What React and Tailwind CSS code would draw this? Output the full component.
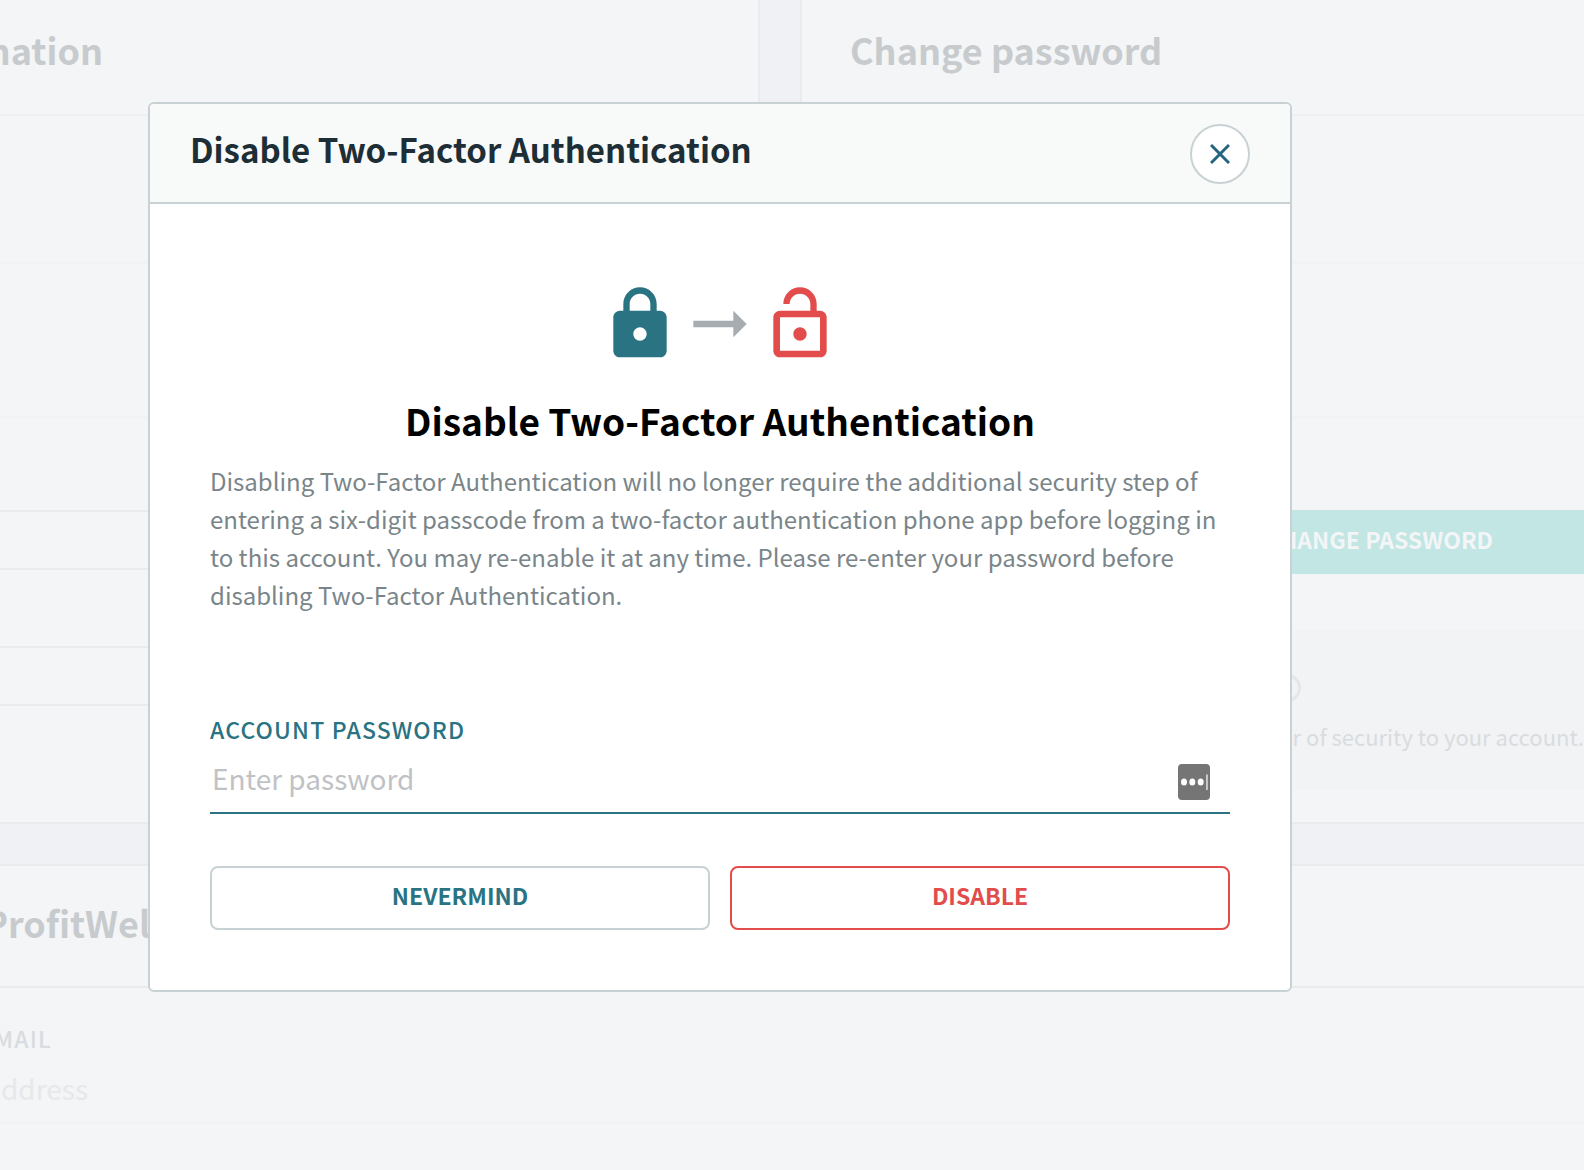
import { useState } from "react";

const LOCK =
  "M18 8h-1V6c0-2.76-2.24-5-5-5S7 3.24 7 6v2H6c-1.1 0-2 .9-2 2v10c0 1.1.9 2 2 2h12c1.1 0 2-.9 2-2V10c0-1.1-.9-2-2-2zm-6 9c-1.1 0-2-.9-2-2s.9-2 2-2 2 .9 2 2-.9 2-2 2zm3.1-9H8.9V6c0-1.71 1.39-3.1 3.1-3.1 1.71 0 3.1 1.39 3.1 3.1v2z";
const ARROW = "M16 11H4v2h12v3l4-4-4-4z";
const LOCK_OPEN =
  "M12 17c1.1 0 2-.9 2-2s-.9-2-2-2-2 .9-2 2 .9 2 2 2zm6-9h-1V6c0-2.76-2.24-5-5-5S7 3.24 7 6h1.9c0-1.71 1.39-3.1 3.1-3.1 1.71 0 3.1 1.39 3.1 3.1v2H6c-1.1 0-2 .9-2 2v10c0 1.1.9 2 2 2h12c1.1 0 2-.9 2-2V10c0-1.1-.9-2-2-2zm0 12H6V10h12v10z";

function Icon({ path, className }) {
  return (
    <svg
      viewBox="0 0 24 24"
      fill="currentColor"
      aria-hidden="true"
      className={`h-20 w-20 ${className}`}>
      <path d={path} />
    </svg>
  );
}

// Faded account settings page behind the dialog
function SettingsPage() {
  return (
    <div className="flex min-h-screen flex-col gap-10 bg-[#f0f1f5] text-[#c8cbce]">
      <div className="flex gap-10">
        <section className="h-[824px] w-[760px] shrink-0 border-r-2 border-b-2 border-[#e9ebee] bg-[#f3f5f7]">
          <div className="flex h-[116px] w-full border-b-2 border-[#eff0f2] pt-5">
            <h2 className="flex w-[103px] justify-end overflow-hidden text-[36px] leading-[58px] font-semibold">
              Information
            </h2>
          </div>
          <div className="h-[148px] border-b-2 border-[#f0f2f4]" />
          <div className="h-[154px] border-b-2 border-[#f0f2f4]" />
          <div className="h-[94px] border-b-2 border-[#e9ebee]" />
          <div className="h-[58px] border-b-2 border-[#e9ebee]" />
          <div className="h-[78px] border-b-2 border-[#e9ebee]" />
          <div className="h-[58px] border-b-2 border-[#e9ebee]" />
        </section>
        <section className="h-[824px] min-w-0 flex-1 border-b-2 border-l-2 border-[#e9ebee] bg-[#f3f5f7]">
          <div className="h-[116px] border-b-2 border-[#eff0f2] pt-5 pl-12">
            <h2 className="text-[36px] leading-[58px] font-semibold">
              Change password
            </h2>
          </div>
          <div className="h-[148px] border-b-2 border-[#f0f2f4]" />
          <div className="h-[154px] border-b-2 border-[#f0f2f4]" />
          <button
            type="button"
            className="mt-[92px] mb-14 ml-12 flex h-16 w-[calc(100%-48px)] items-center justify-end bg-[#c1e6e3] pr-[91px] pb-1.5 text-[23px] font-bold text-[#f3f5f7]">
            CHANGE PASSWORD
          </button>
          <div className="ml-12 flex h-40 flex-col items-end bg-[#f1f3f5] pt-11">
            <span className="mr-[283px] h-7 w-7 rounded-full border-3 border-[#e4e6e8]" />
            <p className="mt-4 flex w-[340px] justify-end text-[22px] leading-[36px] whitespace-nowrap text-[#d9dcde]">
              An extra layer of security to your account.
            </p>
          </div>
        </section>
      </div>
      <section className="flex-1 border-t-2 border-[#e9ebee] bg-[#f3f5f7]">
        <div className="h-[122px] border-b-2 border-[#e9ebee] pt-[27px]">
          <h2 className="-ml-4 text-[36px] leading-[58px] font-semibold">
            ProfitWell
          </h2>
        </div>
        <div className="h-[136px] border-b-2 border-[#f0f2f4] pt-7">
          <label
            htmlFor="email"
            className="flex w-[52px] justify-end overflow-hidden text-[23px] leading-[44px] font-medium tracking-wider text-[#d9dcde]">
            EMAIL
          </label>
          <div className="flex w-[88px] justify-end overflow-hidden">
            <input
              id="email"
              placeholder="Email address"
              className="w-[240px] shrink-0 bg-transparent text-right text-[28px] leading-[56px] outline-none placeholder:text-[#e6e8ea]"
            />
          </div>
        </div>
      </section>
    </div>
  );
}

function App() {
  const [password, setPassword] = useState("");

  return (
    <div className="relative min-h-screen overflow-hidden font-['Noto_Sans_CJK_JP','Noto_Sans',sans-serif]">
      <SettingsPage />
      <div className="absolute inset-0 pt-[102px] pr-[292px] pl-[148px]">
        <div
          role="dialog"
          aria-labelledby="dialog-title"
          className="w-full overflow-hidden rounded-md border-2 border-[#c8d1d4] bg-white">
          <header className="flex items-start justify-between border-b-2 border-[#c8d1d4] bg-[#f8faf9] px-10 pt-5 pb-[18px]">
            <h1
              id="dialog-title"
              className="text-[33px] leading-[50px] font-semibold text-[#1d2e36]">
              Disable Two-Factor Authentication
            </h1>
            <button
              type="button"
              aria-label="Close"
              className="flex h-[60px] w-[60px] items-center justify-center rounded-full border-2 border-[#c8d1d4] bg-white text-[#266580]">
              <svg
                viewBox="0 0 20 20"
                fill="none"
                stroke="currentColor"
                strokeWidth="3"
                className="h-5 w-5">
                <path d="M1 1l18 18M19 1L1 19" />
              </svg>
            </button>
          </header>
          <form
            className="px-15 pt-20 pb-15"
            onSubmit={(e) => e.preventDefault()}>
            <div className="flex justify-center">
              <Icon path={LOCK} className="text-[#297382]" />
              <Icon path={ARROW} className="text-[#a6acb0]" />
              <Icon path={LOCK_OPEN} className="text-[#e24c4b]" />
            </div>
            <h2 className="mt-[26px] text-center text-[37px] leading-[60px] font-bold text-black">
              Disable Two-Factor Authentication
            </h2>
            <p className="mt-3 text-[24px] leading-[38px] text-[#7a8589]">
              Disabling Two-Factor Authentication will no longer require the
              additional security step of entering a six-digit passcode from a
              two-factor authentication phone app before logging in to this
              account. You may re-enable it at any time. Please re-enter your
              password before disabling Two-Factor Authentication.
            </p>
            <label
              htmlFor="password"
              className="mt-24 block text-[23px] leading-[38px] font-medium tracking-wider text-[#297382]">
              ACCOUNT PASSWORD
            </label>
            <div className="flex h-[66px] items-center border-b-2 border-[#297382] pr-5 pl-0.5">
              <input
                id="password"
                type="password"
                placeholder="Enter password"
                value={password}
                onChange={(e) => setPassword(e.target.value)}
                className="min-w-0 flex-1 bg-transparent pb-1 text-[28px] leading-[56px] outline-none placeholder:text-[#bfc2c5]"
              />
              <svg viewBox="0 0 32 36" aria-hidden="true" className="mt-1 h-9 w-8">
                <rect width="32" height="36" rx="4" fill="#757575" />
                <g fill="#fff">
                  <ellipse cx="6" cy="18" rx="3" ry="3.6" />
                  <ellipse cx="14.3" cy="18" rx="3" ry="3.6" />
                  <ellipse cx="22.7" cy="18" rx="3" ry="3.6" />
                  <path d="M28.2 10.5h1.5v15.5h-1.5z" opacity=".8" />
                </g>
              </svg>
            </div>
            <div className="mt-[52px] flex gap-5">
              <button
                type="button"
                className="h-16 flex-1 rounded-lg border-2 border-[#c8d1d4] pb-1.5 text-[23px] font-bold text-[#297382]">
                NEVERMIND
              </button>
              <button
                type="submit"
                className="h-16 flex-1 rounded-lg border-2 border-[#e24c4b] pb-1.5 text-[23px] font-bold text-[#e24c4b]">
                DISABLE
              </button>
            </div>
          </form>
        </div>
      </div>
    </div>
  );
}

export default App;
